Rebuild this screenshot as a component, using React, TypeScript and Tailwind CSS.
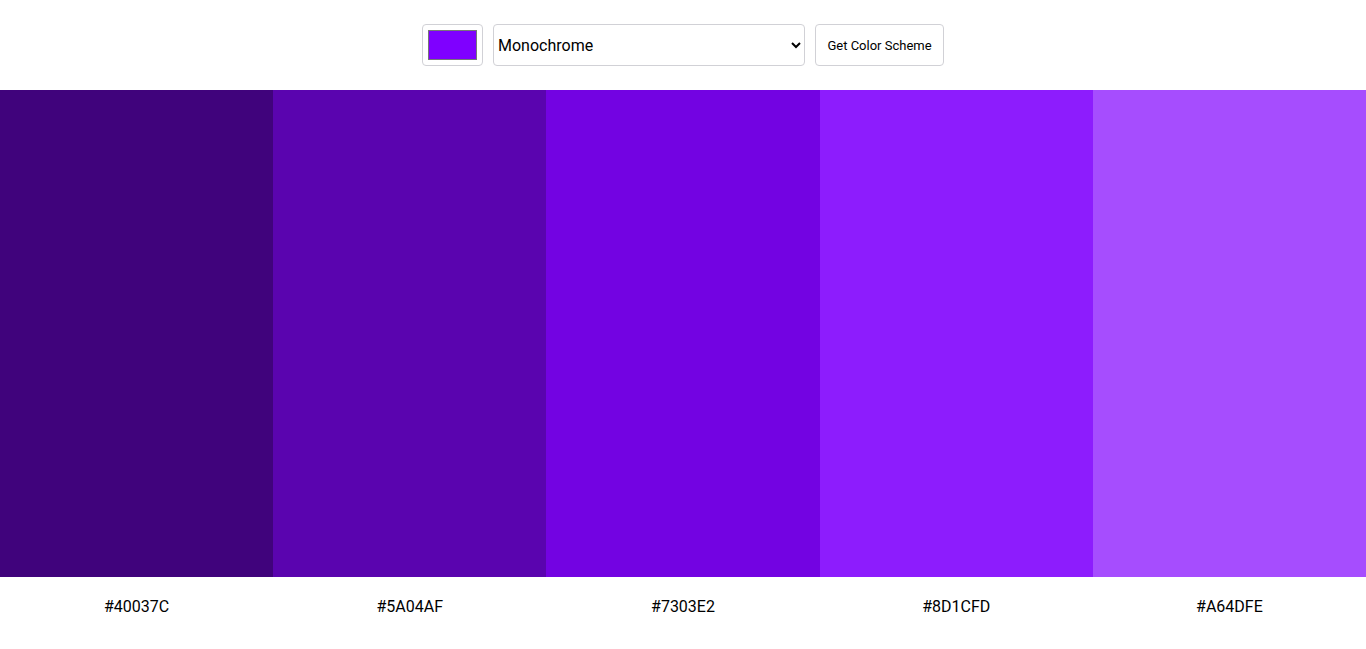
import { useState } from "react";

const colors = ["#40037C", "#5A04AF", "#7303E2", "#8D1CFD", "#A64DFE"];

export default function App() {
  const [seed, setSeed] = useState("#7F00FF");
  const [mode, setMode] = useState("monochrome");

  return (
    <div className="min-h-screen bg-white font-['Roboto',sans-serif] text-black">
      {/* header form */}
      <form
        className="flex h-[90px] items-center justify-center gap-[10px]"
        onSubmit={(e) => e.preventDefault()}
      >
        <input
          type="color"
          value={seed}
          onChange={(e) => setSeed(e.target.value)}
          className="h-[42px] w-[61px] cursor-pointer rounded-[4px] border border-[#d1d1d6] bg-white p-[5px] [&::-webkit-color-swatch-wrapper]:p-0 [&::-webkit-color-swatch]:border-[#777]"
        />
        <select
          value={mode}
          onChange={(e) => setMode(e.target.value)}
          className="h-[42px] w-[312px] rounded-[4px] border border-[#d1d1d6] bg-white px-0 text-base"
        >
          <option value="monochrome">Monochrome</option>
          <option value="monochrome-dark">Monochrome-dark</option>
          <option value="monochrome-light">Monochrome-light</option>
          <option value="analogic">Analogic</option>
          <option value="complement">Complement</option>
          <option value="analogic-complement">Analogic-complement</option>
          <option value="triad">Triad</option>
          <option value="quad">Quad</option>
        </select>
        <button
          type="submit"
          className="h-[42px] w-[129px] rounded-[4px] border border-[#d1d1d6] bg-white pt-px text-[13px]"
        >
          Get Color Scheme
        </button>
      </form>

      {/* swatches */}
      <div className="grid grid-cols-5">
        {colors.map((c) => (
          <div key={c} className="flex flex-col">
            <div className="h-[487px]" style={{ backgroundColor: c }} />
            <p className="flex h-[60px] items-center justify-center text-base">{c}</p>
          </div>
        ))}
      </div>
    </div>
  );
}
